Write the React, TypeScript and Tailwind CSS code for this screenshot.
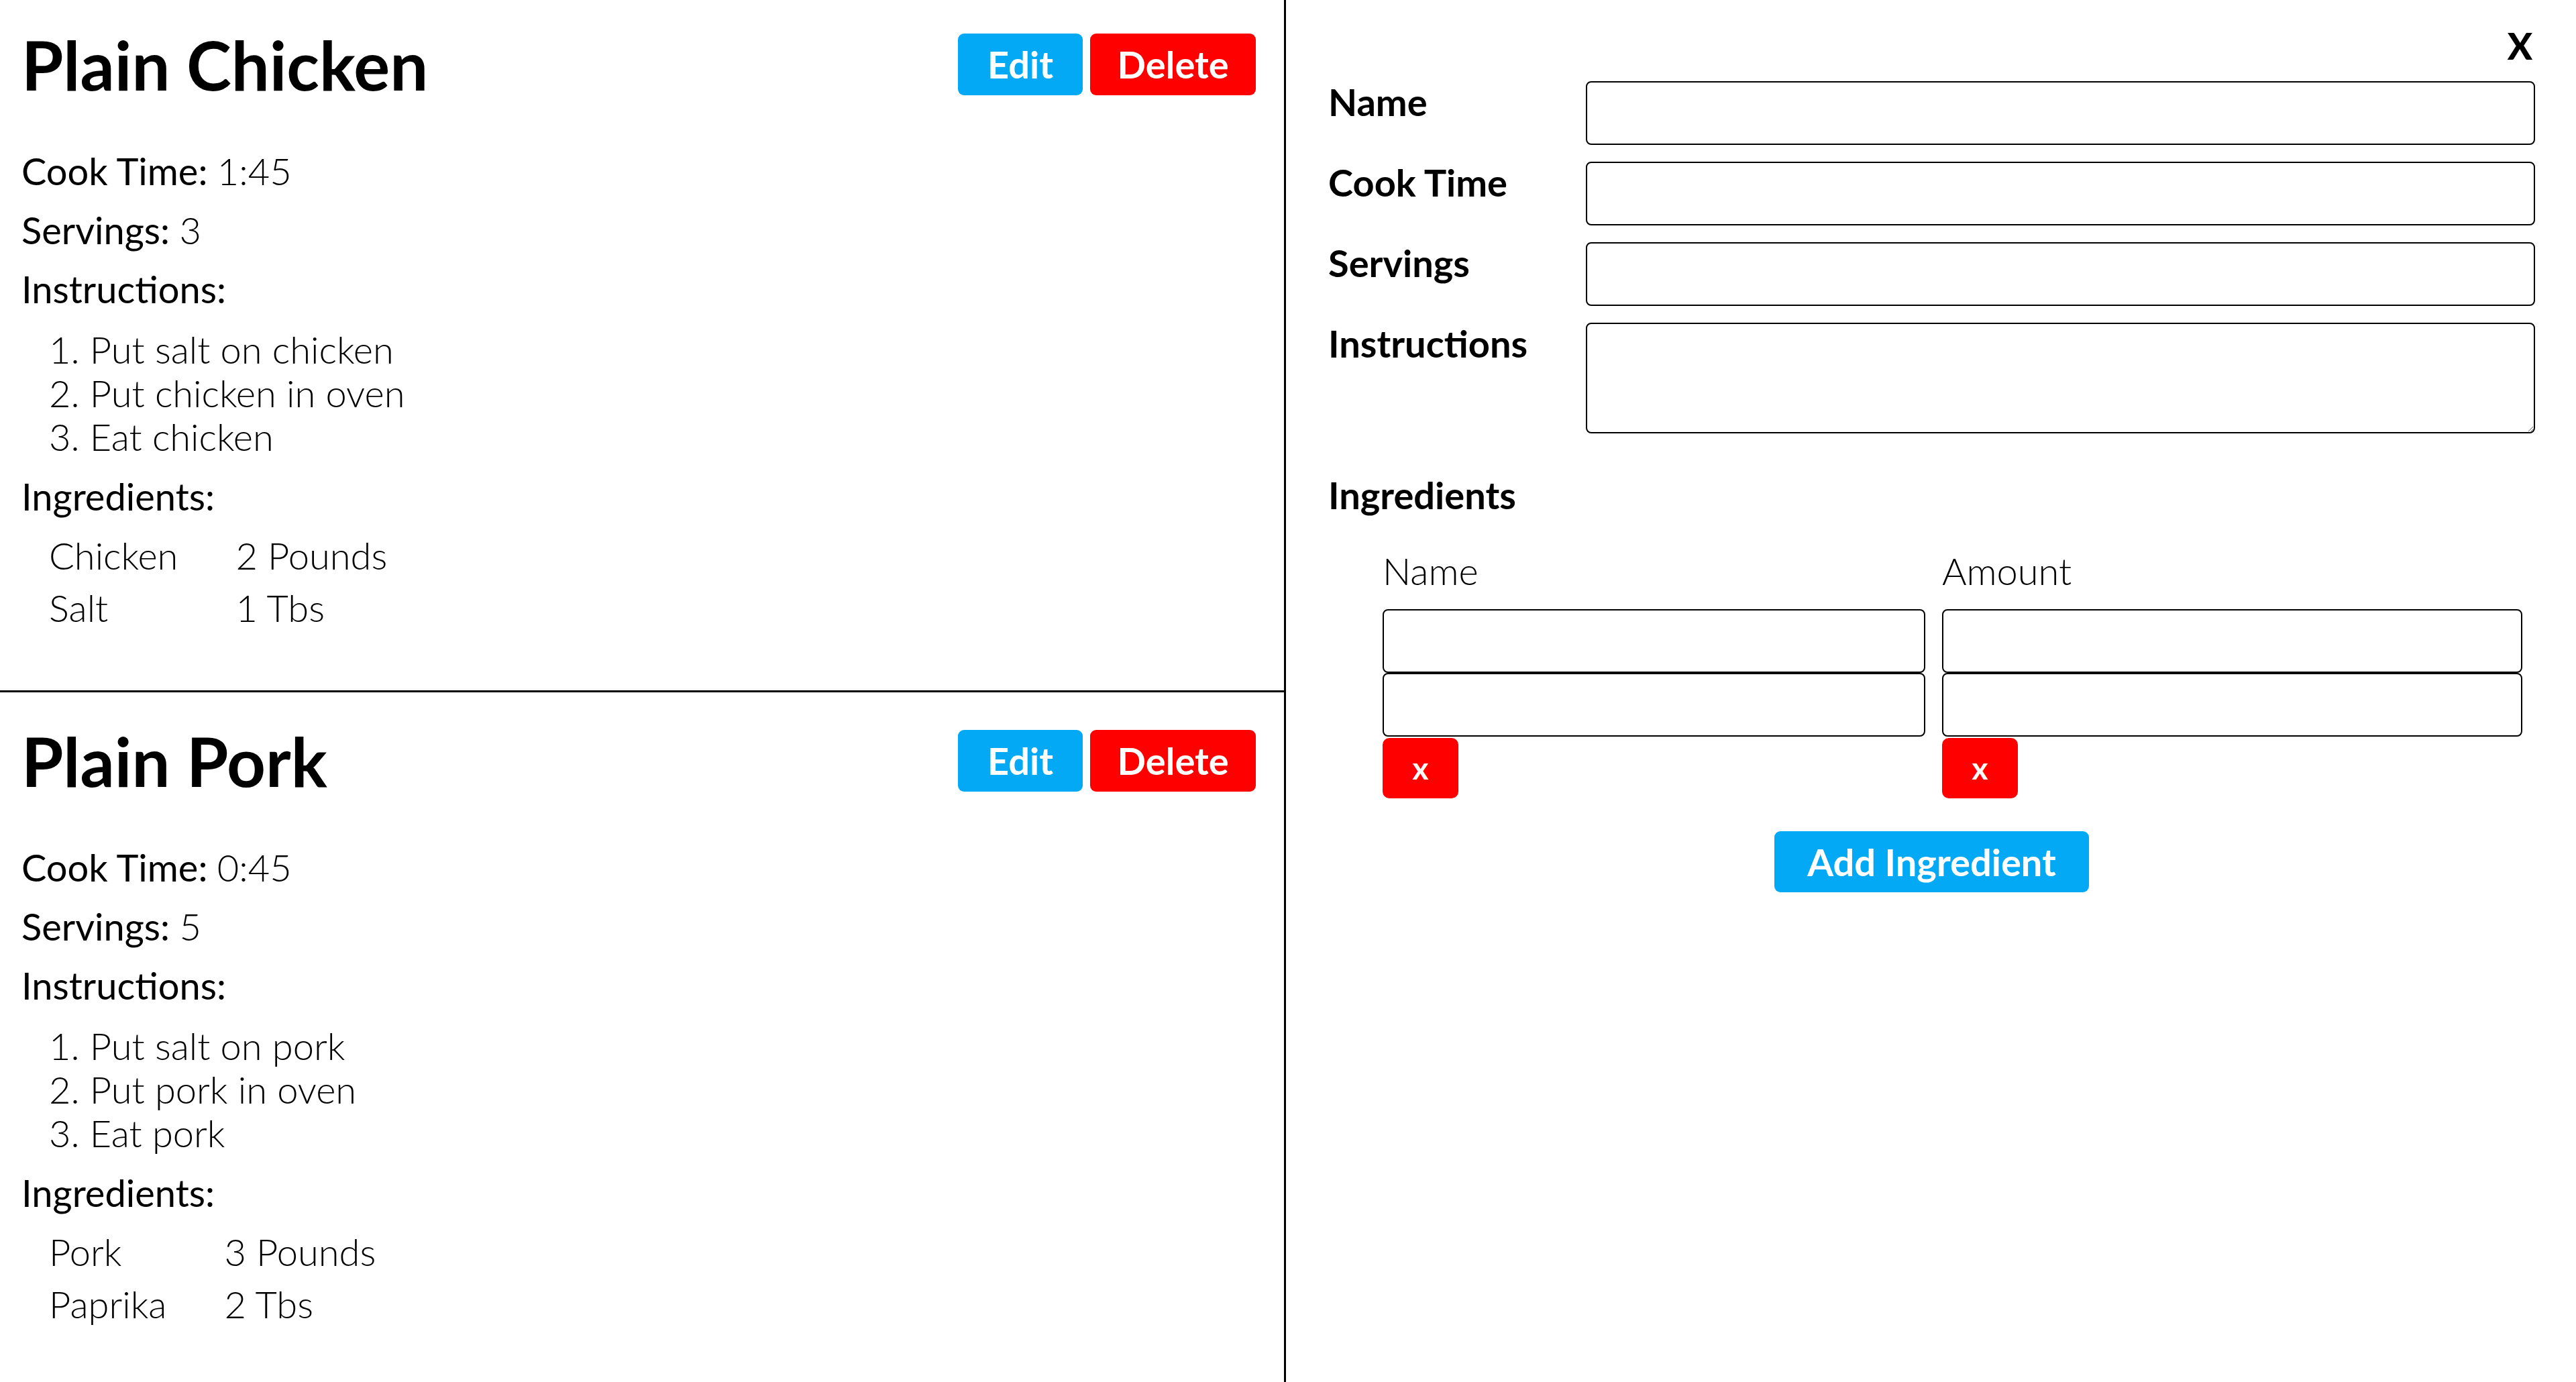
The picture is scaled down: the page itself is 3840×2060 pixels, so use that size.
import React from "react";

type Recipe = {
  name: string;
  cookTime: string;
  servings: string;
  instructions: string[];
  ingredients: [string, string][];
};

const recipes: Recipe[] = [
  {
    name: "Plain Chicken",
    cookTime: "1:45",
    servings: "3",
    instructions: ["Put salt on chicken", "Put chicken in oven", "Eat chicken"],
    ingredients: [
      ["Chicken", "2 Pounds"],
      ["Salt", "1 Tbs"],
    ],
  },
  {
    name: "Plain Pork",
    cookTime: "0:45",
    servings: "5",
    instructions: ["Put salt on pork", "Put pork in oven", "Eat pork"],
    ingredients: [
      ["Pork", "3 Pounds"],
      ["Paprika", "2 Tbs"],
    ],
  },
];

function RecipeCard({ recipe, first }: { recipe: Recipe; first: boolean }) {
  return (
    <div
      className={
        first
          ? "h-[1032px] border-b-[3px] border-black pl-[32px] pr-[42px] pt-[50px]"
          : "pl-[32px] pr-[42px] pt-[56px]"
      }
    >
      <div className="flex h-[92px] items-center justify-between">
        <h1 className="text-[101px] font-bold leading-none">{recipe.name}</h1>
        <div className="flex gap-[11px]">
          <button className="h-[92px] w-[186px] rounded-[9px] bg-[#03a9f4] text-[56px] font-bold leading-none text-white">
            Edit
          </button>
          <button className="h-[92px] w-[247px] rounded-[9px] bg-[#ff0000] text-[56px] font-bold leading-none text-white">
            Delete
          </button>
        </div>
      </div>
      <div className="mt-[69px] text-[56px] leading-[88px]">
        <p>
          Cook Time: <span className="font-light">{recipe.cookTime}</span>
        </p>
        <p>
          Servings: <span className="font-light">{recipe.servings}</span>
        </p>
        <p>Instructions:</p>
      </div>
      <ol className="mt-[13px] list-inside list-decimal pl-[41px] text-[56px] font-light leading-[65px]">
        {recipe.instructions.map((s) => (
          <li key={s}>{s}</li>
        ))}
      </ol>
      <p className="mt-[13px] text-[56px] leading-[88px]">Ingredients:</p>
      <table className="ml-[41px] mt-[5px] text-[56px] font-light leading-[78px]">
        <tbody>
          {recipe.ingredients.map(([n, a]) => (
            <tr key={n}>
              <td className="p-0 pr-[86px]">{n}</td>
              <td className="p-0">{a}</td>
            </tr>
          ))}
        </tbody>
      </table>
    </div>
  );
}

const inputCls = "h-[95px] w-full rounded-[8px] border-2 border-black bg-white";
const labelCls = "-mt-[3px] text-[56px] font-bold leading-[1.2]";

function IngredientColumn({ title }: { title: string }) {
  return (
    <div className="flex flex-col">
      <span className="text-[56px] font-light leading-[1.2]">{title}</span>
      <input className={`mt-[24px] ${inputCls}`} />
      <input className={inputCls} />
      <button className="mt-[2px] flex h-[90px] w-[113px] items-center justify-center rounded-[10px] bg-[#ff0000] text-[46px] font-bold leading-none text-white">
        x
      </button>
    </div>
  );
}

export default function App() {
  return (
    <div className="flex h-[2060px] w-[3840px] overflow-hidden bg-white text-black [font-family:Lato,sans-serif]">
      <div className="h-full w-[1917px] shrink-0 border-r-[3px] border-black">
        {recipes.map((r, i) => (
          <RecipeCard key={r.name} recipe={r} first={i === 0} />
        ))}
      </div>
      <div className="flex flex-1 flex-col pl-[63px] pr-[61px] pt-[36px]">
        <div className="flex justify-end">
          <button className="mr-[4px] text-[55px] font-black leading-[65px]">X</button>
        </div>
        <div className="mt-[20px] grid grid-cols-[384px_1fr] gap-y-[25px]">
          <label className={labelCls}>Name</label>
          <input className={inputCls} />
          <label className={labelCls}>Cook Time</label>
          <input className={inputCls} />
          <label className={labelCls}>Servings</label>
          <input className={inputCls} />
          <label className={labelCls}>Instructions</label>
          <textarea className="h-[165px] w-full rounded-[8px] border-2 border-black bg-white" />
        </div>
        <h2 className="mt-[58px] text-[56px] font-bold leading-[1.2]">Ingredients</h2>
        <div className="ml-[81px] mt-[46px] grid grid-cols-[809px_865px] gap-x-[25px]">
          <IngredientColumn title="Name" />
          <IngredientColumn title="Amount" />
        </div>
        <button className="mx-auto mt-[49px] h-[91px] w-[469px] rounded-[9px] bg-[#03a9f4] text-[56px] font-bold leading-none text-white">
          Add Ingredient
        </button>
      </div>
    </div>
  );
}
